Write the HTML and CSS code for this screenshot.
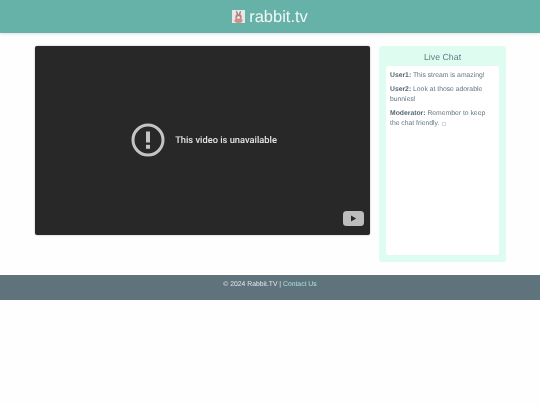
FILE: index.html
```html
<!DOCTYPE html>
<html lang="en">
<head>
<meta charset="utf-8">
<title>rabbit.tv</title>
<link rel="stylesheet" href="styles.css">
</head>
<body>
<header class="site-header">
  <svg class="logo" viewBox="0 0 13 13" aria-hidden="true">
    <rect width="13" height="13" fill="#e9e6e4"/>
    <path d="M4 1.5 L5 5 L8 5 L9 1.5 L8 1 L7 4 L6 4 L5 1 Z" fill="#8d6f68"/>
    <ellipse cx="6.5" cy="7" rx="3.2" ry="3" fill="#a98a84"/>
    <ellipse cx="6.5" cy="10.5" rx="4" ry="2.5" fill="#cf8f88"/>
    <ellipse cx="6.5" cy="7.5" rx="1.5" ry="1.2" fill="#f4eeea"/>
  </svg>
  <span class="brand soft">rabbit.tv</span>
</header>
<main class="content">
  <section class="player">
    <div class="unavailable">
      <svg class="warn" viewBox="0 0 34 34" aria-hidden="true">
        <circle cx="17" cy="17" r="15" fill="none" stroke="#c4c4c4" stroke-width="3"/>
        <rect x="15" y="8.5" width="4" height="11" fill="#c4c4c4"/>
        <rect x="15" y="21.8" width="4" height="4" fill="#c4c4c4"/>
      </svg>
      <span class="unavailable-text soft">This video is unavailable</span>
    </div>
    <svg class="yt" viewBox="0 0 21 15" aria-hidden="true">
      <rect width="21" height="15" rx="3.5" fill="#bdbdbd"/>
      <path d="M8 4.5 L13.2 7.5 L8 10.5 Z" fill="#2a2a2a"/>
    </svg>
  </section>
  <aside class="chat">
    <h2 class="chat-title soft">Live Chat</h2>
    <div class="messages soft">
      <p class="msg"><strong>User1:</strong> This stream is amazing!</p>
      <p class="msg"><strong>User2:</strong> Look at those adorable bunnies!</p>
      <p class="msg"><strong>Moderator:</strong> Remember to keep the chat friendly. <span class="tofu"></span></p>
    </div>
  </aside>
</main>
<footer class="site-footer">
  <span class="soft">© 2024 Rabbit.TV | <a class="link" href="#">Contact Us</a></span>
</footer>
</body>
</html>
```
FILE: styles.css
```css
* { box-sizing: border-box; }
html, body { margin: 0; background: #fefefe; }
body {
  font-family: "Liberation Sans", Arial, sans-serif;
  height: 405px;
  overflow: hidden;
  text-rendering: geometricPrecision;
}
.soft { filter: blur(.25px); }
.site-header {
  height: 33px;
  background: #66b2a8;
  box-shadow: 0 1px 3px rgba(0,0,0,.12);
  display: flex;
  align-items: center;
  justify-content: center;
  gap: 4px;
  color: #f3f8f7;
}
.logo { width: 13px; height: 13px; }
.brand { font-size: 16.5px; line-height: 20px; }
.content {
  display: flex;
  align-items: flex-start;
  gap: 9px;
  padding: 13px 34px 13px 35px;
}
.player {
  position: relative;
  flex: none;
  width: 335px;
  height: 189px;
  background: #282828;
  border-radius: 2px;
  box-shadow: 0 0 2px rgba(0,0,0,.3);
  display: flex;
  align-items: center;
  justify-content: center;
}
.unavailable { display: flex; align-items: center; gap: 10px; margin: -1px 0 0 3px; }
.warn { width: 34px; height: 34px; }
.unavailable-text { color: #e4e4e4; font-family: Roboto, "Liberation Sans", sans-serif; font-size: 9.3px; font-weight: 500; padding-top: 1px; }
.yt { position: absolute; right: 6px; bottom: 9px; width: 21px; height: 15px; }
.chat {
  flex: none;
  width: 127px;
  height: 216px;
  background: #dffcf0;
  border-radius: 3px;
  padding: 6px 7px 7px;
  display: flex;
  flex-direction: column;
}
.chat-title { margin: 0 0 3px; font-size: 8.8px; line-height: 11px; font-weight: 400; text-align: center; color: #5f7d80; }
.messages { flex: 1; background: #fff; border-radius: 2px; padding: 5px 8px 4px 4px; }
.msg { margin: 0 0 4px; font-size: 6.8px; line-height: 10px; color: #627680; }
.msg strong { color: #566a74; }
.tofu { display: inline-block; width: 4px; height: 4px; border: 1px solid #d5dadd; vertical-align: -0.5px; margin-left: 1px; }
.site-footer {
  height: 25px;
  background: #5f737d;
  display: flex;
  justify-content: center;
  padding-top: 4.5px;
  font-size: 6.8px;
  line-height: 10px;
  color: #e3e8ea;
}
.link { color: #a8e4e0; text-decoration: none; }
```
